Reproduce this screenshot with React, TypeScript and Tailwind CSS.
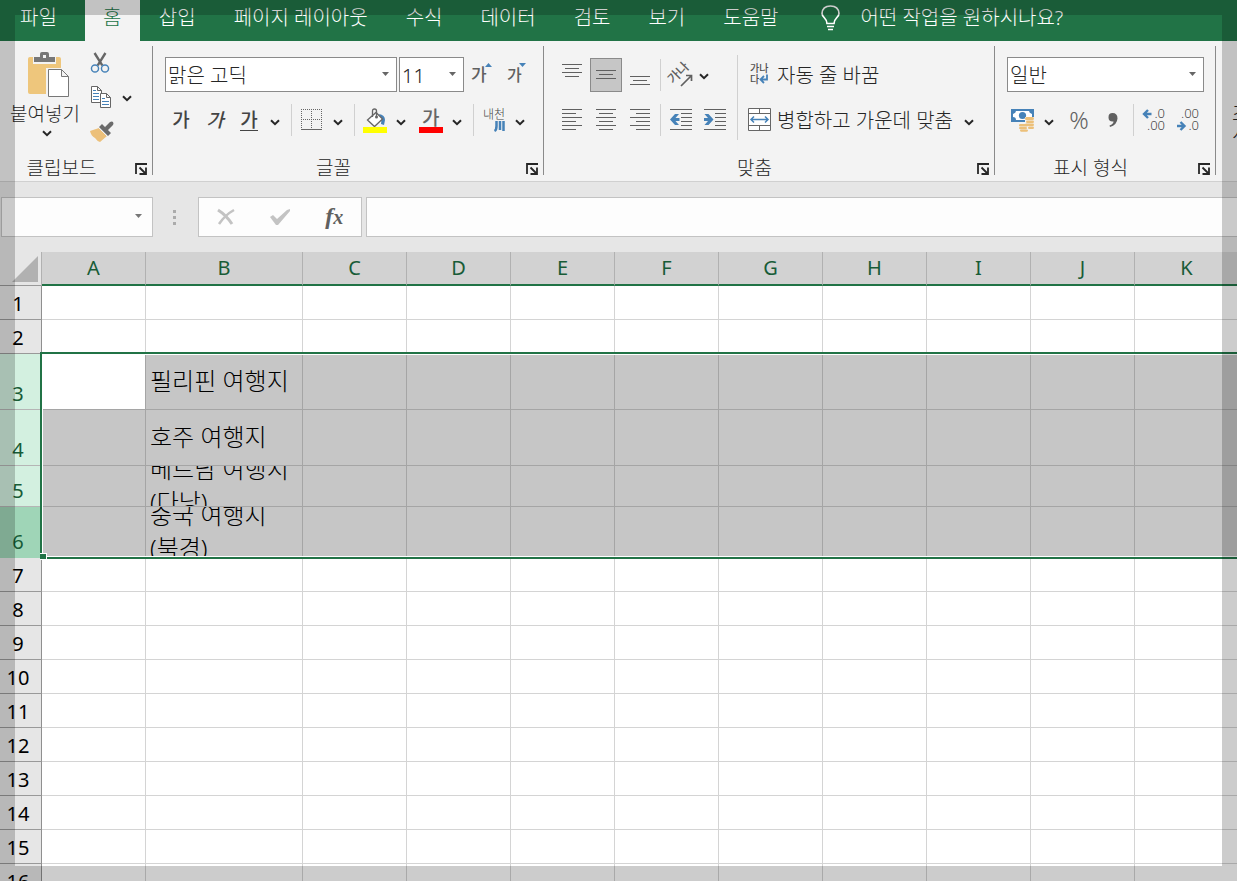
import type { ReactNode } from "react";

const tabs = ["삽입", "페이지 레이아웃", "수식", "데이터", "검토", "보기", "도움말"];

const columns = ["A", "B", "C", "D", "E", "F", "G", "H", "I", "J", "K"];

type Row = { n: number; text?: string[]; height: string; inner: string; selected?: boolean; head: string };

const plain = "bg-[#e6e6e6] text-black border-b-[#999999]";
const picked = "bg-[#d3f0e0] text-[#185c37] border-b-[#b5b5b5]";

const rows: Row[] = [
    { n: 1, height: "h-[34px]", inner: "h-[33px]", head: plain },
    { n: 2, height: "h-[34px]", inner: "h-[33px]", head: plain },
    { n: 3, text: ["필리핀 여행지"], height: "h-[56px]", inner: "h-[55px]", selected: true, head: picked },
    { n: 4, text: ["호주 여행지"], height: "h-[56px]", inner: "h-[55px]", selected: true, head: picked },
    { n: 5, text: ["베트남 여행지", "(다낭)"], height: "h-[41px]", inner: "h-[40px]", selected: true, head: picked },
    { n: 6, text: ["중국 여행지", "(북경)"], height: "h-[51px]", inner: "h-[50px]", selected: true, head: "bg-[#9fd5b7] text-[#185c37] border-b-[#9fd5b7]" },
    ...[7, 8, 9, 10, 11, 12, 13, 14, 15, 16].map((n) => ({ n, height: "h-[34px]", inner: "h-[33px]", head: plain })),
];

const Chevron = () => (
    <svg width="10" height="7" viewBox="0 0 10 7" fill="none" stroke="#262626" strokeWidth="2">
        <path d="M1 1.2 5 5.2 9 1.2" />
    </svg>
);

const MoreButton = ({ label, className = "" }: { label: string; className?: string }) => (
    <button aria-label={label} className={`flex h-8 w-3 shrink-0 items-center justify-center pt-1 ${className}`}>
        <Chevron />
    </button>
);

const Tool = ({ label, className = "w-8", children }: { label: string; className?: string; children: ReactNode }) => (
    <button aria-label={label} className={`flex h-[34px] shrink-0 items-center justify-center ${className}`}>
        {children}
    </button>
);

const Separator = ({ className = "" }: { className?: string }) => <div className={`h-8 w-px shrink-0 bg-[#d0d0d0] ${className}`} />;

const Group = ({ name, className, children }: { name: string; className: string; children: ReactNode }) => (
    <section aria-label={name} className={`flex shrink-0 flex-col border-r border-[#8a8a8a] ${className}`}>
        <div className="flex-1">{children}</div>
        <div className="flex h-4 items-end pr-[5px]">
            <h2 className="flex-1 pr-3 text-center text-[19px] leading-[14px]">{name}</h2>
            <button aria-label={`${name} 설정`} className="h-3 w-3">
                <svg width="12" height="12" viewBox="0 0 12 12" fill="none" stroke="#262626" strokeWidth="1.8">
                    <path d="M1 11V1H12M4.500 4.500l6 6M11 4.500V11H4.500" />
                </svg>
            </button>
        </div>
    </section>
);

const Dropdown = ({ label, value, className }: { label: string; value: string; className: string }) => (
    <div className={`relative h-[35px] shrink-0 ${className}`}>
        <select aria-label={label} className="h-full w-full appearance-none border border-[#8a8a8a] bg-white pt-0.5 pl-0.5">
            <option>{value}</option>
        </select>
        <svg className="pointer-events-none absolute top-[15px] right-2" width="7" height="4" viewBox="0 0 7 4" fill="#666">
            <path d="M0 0h7L3.500 4z" />
        </svg>
    </div>
);

const Lines = ({ d }: { d: string }) => (
    <svg width="22" height="22" viewBox="0 0 22 22" fill="none" stroke="#606060" strokeWidth="1" shapeRendering="crispEdges">
        <path d={d} />
    </svg>
);

const PasteIcon = () => (
    <svg width="42" height="46" viewBox="0 0 42 46">
        <path fill="#eec67c" d="M2 5h29q2 0 2 2v35H2q-2 0-2-2V7q0-2 2-2z" />
        <path fill="#f3f3f3" d="M5 4h23v8H5z" />
        <path fill="#777" fillRule="evenodd" d="M6 5h6V2q0-2 2-2h5q2 0 2 2v3h6v5H6zM15 3v3h3V3z" />
        <path fill="#f3f3f3" d="M18 16h24v30H18z" />
        <path fill="#fff" stroke="#777" d="M20.500 17.500h13l7 7v20h-20zM33.500 17.500v7h7" />
    </svg>
);

const ScissorsIcon = () => (
    <svg width="22" height="24" viewBox="0 0 22 24" fill="none">
        <path d="M5 1l8.500 13.500M17 1 8.500 14.500" stroke="#666" strokeWidth="2.600" />
        <circle cx="5.500" cy="18" r="3.900" stroke="#4682b8" strokeWidth="1.600" />
        <circle cx="16.500" cy="18" r="3.900" stroke="#4682b8" strokeWidth="1.600" />
    </svg>
);

const CopyIcon = () => (
    <svg width="22" height="24" viewBox="0 0 22 24">
        <path fill="#fff" stroke="#666" d="M1.500 1.500h6l4 4v12h-10zM7.500 1.500v4h4" />
        <path stroke="#4682b8" d="M3 5.500h3M3 8.500h6M3 11.500h6M3 14.500h6" />
        <path fill="#fff" stroke="#666" d="M10.500 8.500h6l4 4v10h-10zM16.500 8.500v4h4" />
        <path stroke="#4682b8" d="M12 13.500h3M12 16.500h7M12 19.500h7" />
    </svg>
);

const BrushIcon = () => (
    <svg width="24" height="22" viewBox="0 0 24 22">
        <path fill="#ecc07a" d="M0 10l9-3 8 8-7 6q-3-1-5-4-4-2-5-7z" />
        <path fill="#6b6b6b" d="M9 6l3-3 9 9-3 3zM15 6l5-5q2-1 3 0 1 2 0 3l-5 5z" />
        <path stroke="#f3f3f3" d="M8.500 6.500l9 9" />
    </svg>
);

const OrientationIcon = () => (
    <svg className="overflow-visible" width="24" height="24" viewBox="0 0 24 24">
        <text x="0" y="0" fontSize="13" fontWeight="500" fill="#606060" textAnchor="middle" transform="translate(12.500 13) rotate(-45)">가나</text>
        <path d="M12 23 22.500 12.500M17 12.500h5.500v5.500" fill="none" stroke="#606060" strokeWidth="1.700" />
    </svg>
);

const WrapIcon = () => (
    <svg className="overflow-visible" width="22" height="24" viewBox="0 0 22 24" fill="#505050" fontSize="10" fontWeight="500">
        <text x="1" y="9">가나</text>
        <text x="1" y="20">다</text>
        <path d="M18 11.500v5h-6M15 13l-3.500 3.500L15 20" fill="none" stroke="#4682b8" strokeWidth="1.800" />
    </svg>
);

const MergeIcon = () => (
    <svg width="24" height="24" viewBox="0 0 24 24" fill="none">
        <path fill="#fff" stroke="#666" d="M.5.500h22v22H.5zM.5 5.500h22M.5 17.500h22M11.500.500v5M11.500 17.500v5" />
        <path stroke="#4682b8" strokeWidth="1.500" d="M3 11.500h17M6 8.500l-3 3 3 3M17 8.500l3 3-3 3" />
    </svg>
);

const BorderIcon = () => (
    <svg width="22" height="22" viewBox="0 0 22 22" fill="none" stroke="#666" shapeRendering="crispEdges">
        <path strokeDasharray="1 1" d="M0 .5h21M0 10.500h21M.5 0v21M10.500 0v21M20.500 0v21" />
        <path d="M0 20.500h21" />
    </svg>
);

const BucketIcon = () => (
    <svg width="24" height="25" viewBox="0 0 24 25">
        <path fill="#4682b8" d="M16 6q6 1 6 6l-1 5-3-1q1-4-2-10z" />
        <path fill="#fff" stroke="#666" strokeWidth="1.300" d="M4.500 12 13 4.500l6.500 6.500-8 7.500z" />
        <path fill="none" stroke="#666" strokeWidth="1.300" d="M9.500 9V3q0-2 2-2t2 2v6" />
        <circle cx="13.500" cy="9" r="1.500" fill="#666" />
        <path fill="#ff0" d="M0 19h24v6H0z" />
    </svg>
);

const MoneyIcon = () => (
    <svg width="24" height="24" viewBox="0 0 24 24">
        <path fill="#4682b8" d="M0 1h23v13H0z" />
        <path fill="#fff" d="M5 3h13q0 2 3 3v3q-3 0-3 3H5q0-3-3-3V6q3-1 3-3z" />
        <circle cx="11.500" cy="7.500" r="3.600" fill="#4682b8" />
        <path fill="#f3f3f3" d="M14 9h10v14H7v-8h7z" />
        <g fill="#ecc07a">
            <rect x="14" y="9" width="9" height="3" rx="1.500" />
            <rect x="15" y="12.500" width="8" height="2.500" rx="1.200" />
            <rect x="14" y="15.500" width="9" height="2.500" rx="1.200" />
            <rect x="17" y="18.500" width="6" height="2.500" rx="1.200" />
            <rect x="8" y="16" width="9" height="2.500" rx="1.200" />
            <rect x="8" y="19" width="8" height="2.200" rx="1.100" />
            <rect x="9" y="21.500" width="8" height="2.200" rx="1.100" />
        </g>
    </svg>
);

const Indent = ({ arrow }: { arrow: string }) => (
    <svg width="22" height="22" viewBox="0 0 22 22">
        <path stroke="#606060" shapeRendering="crispEdges" d="M0 .5h22M11 4.500h11M11 8.500h11M11 12.500h11M11 16.500h11M0 20.500h22" />
        <path fill="#4682b8" d={arrow} />
    </svg>
);

const Ribbon = () => (
    <div className="flex h-[141px] border-b border-[#d0d0d0] bg-[#f3f3f3] pt-[5px] pb-[6px]">
        <Group name="클립보드" className="w-[153px]">
            <div className="flex">
                <button className="flex w-[90px] flex-col items-center pt-[6px]">
                    <span className="pl-2"><PasteIcon /></span>
                    <span className="pt-1 text-[19px] leading-6 whitespace-nowrap">붙여넣기</span>
                    <span className="pt-1 pl-1"><Chevron /></span>
                </button>
                <div>
                    <Tool label="잘라내기" className="w-5"><ScissorsIcon /></Tool>
                    <div className="flex">
                        <Tool label="복사" className="w-[22px]"><CopyIcon /></Tool>
                        <MoreButton label="복사 옵션" className="ml-[9px]" />
                    </div>
                    <Tool label="서식 복사" className="w-6 pt-0.5"><BrushIcon /></Tool>
                </div>
            </div>
        </Group>

        <Group name="글꼴" className="w-[391px]">
            <div className="flex pt-[11px] pl-3">
                <Dropdown label="글꼴 이름" value="맑은 고딕" className="w-[232px]" />
                <Dropdown label="글꼴 크기" value="11" className="ml-0.5 w-[65px]" />
                <Tool label="글꼴 크기 크게" className="w-9">
                    <svg className="overflow-visible" width="22" height="24" viewBox="0 0 22 24">
                        <text x="0" y="19" fontSize="17" fontWeight="500" fill="#606060">가</text>
                        <path fill="#4682b8" d="M14 5h7l-3.500-4z" />
                    </svg>
                </Tool>
                <Tool label="글꼴 크기 작게" className="w-9">
                    <svg className="overflow-visible" width="22" height="24" viewBox="0 0 22 24">
                        <text x="0" y="19" fontSize="16" fontWeight="500" fill="#606060">가</text>
                        <path fill="#4682b8" d="M12 1h7l-3.500 4z" />
                    </svg>
                </Tool>
            </div>
            <div className="flex items-center pt-[11px] pl-3">
                <Tool label="굵게"><span className="text-[19px] leading-5 font-medium text-[#444]">가</span></Tool>
                <Tool label="기울임꼴" className="w-9"><span className="text-[19px] leading-5 font-medium text-[#444] italic">가</span></Tool>
                <Tool label="밑줄"><span className="border-b border-[#444] text-[19px] leading-5 font-medium text-[#444]">가</span></Tool>
                <MoreButton label="밑줄 옵션" className="ml-1" />
                <Separator className="ml-[10px]" />
                <Tool label="테두리" className="w-10"><BorderIcon /></Tool>
                <MoreButton label="테두리 옵션" />
                <Separator className="ml-[10px]" />
                <Tool label="채우기 색" className="w-10"><BucketIcon /></Tool>
                <MoreButton label="채우기 색 옵션" />
                <Tool label="글꼴 색" className="ml-1 w-10">
                    <svg className="overflow-visible" width="24" height="25" viewBox="0 0 24 25">
                        <text x="3" y="17" fontSize="19" fontWeight="500" fill="#666">가</text>
                        <path fill="#f00" d="M0 19h24v6H0z" />
                    </svg>
                </Tool>
                <MoreButton label="글꼴 색 옵션" />
                <Separator className="ml-[10px]" />
                <Tool label="윗주" className="w-10">
                    <svg className="overflow-visible" width="22" height="25" viewBox="0 0 22 25">
                        <text x="0" y="11" fontSize="12" fill="#444">내천</text>
                        <path fill="none" stroke="#4682b8" strokeWidth="2.500" d="M13.500 13v5q0 4-2 5M17 13v9M20.500 13v10" />
                    </svg>
                </Tool>
                <MoreButton label="윗주 옵션" />
            </div>
        </Group>

        <Group name="맞춤" className="w-[451px]">
            <div className="flex">
                <div className="w-[193px] pt-[11px] pl-3">
                    <div className="flex h-[35px] items-center">
                        <Tool label="위쪽 맞춤"><Lines d="M1 .5h20M4 4.500h14M1 8.500h20M4 12.500h14" /></Tool>
                        <Tool label="가운데 맞춤" className="ml-0.5 w-8 border border-[#8a8a8a] bg-[#c6c6c6]"><Lines d="M1 6.500h20M4 10.500h14M1 14.500h20" /></Tool>
                        <Tool label="아래쪽 맞춤" className="ml-0.5 w-8"><Lines d="M1 12.500h20M4 16.500h14M1 20.500h20" /></Tool>
                        <Separator className="ml-1" />
                        <Tool label="방향" className="ml-[3px] w-[34px]"><OrientationIcon /></Tool>
                        <MoreButton label="방향 옵션" />
                    </div>
                    <div className="flex items-center pt-[11px]">
                        <Tool label="왼쪽 맞춤"><Lines d="M1 .5h20M1 4.500h14M1 8.500h20M1 12.500h14M1 16.500h20M1 20.500h14" /></Tool>
                        <Tool label="가운데 맞춤" className="ml-0.5 w-8"><Lines d="M1 .5h20M4 4.500h14M1 8.500h20M4 12.500h14M1 16.500h20M4 20.500h14" /></Tool>
                        <Tool label="오른쪽 맞춤" className="ml-0.5 w-8"><Lines d="M1 .5h20M7 4.500h14M1 8.500h20M7 12.500h14M1 16.500h20M7 20.500h14" /></Tool>
                        <Separator className="ml-1" />
                        <Tool label="내어쓰기" className="ml-[3px] w-[34px]"><Indent arrow="M0 10.500 5 5h4L5.500 9H9.500v3H5.500L9 16H5z" /></Tool>
                        <Tool label="들여쓰기" className="w-[34px]"><Indent arrow="M9.500 10.500 4.500 5h-4L4 9H0v3h4l-3.500 4h4z" /></Tool>
                    </div>
                </div>
                <div className="mt-[9px] h-[85px] w-px bg-[#d0d0d0]" />
                <div className="pt-[11px] pl-[10px]">
                    <button className="flex h-[35px] items-center gap-[5px] whitespace-nowrap">
                        <span className="flex w-6 justify-center"><WrapIcon /></span>
                        <span className="pt-0.5">자동 줄 바꿈</span>
                    </button>
                    <div className="flex items-center pt-[11px]">
                        <button className="flex h-[34px] items-center gap-[5px] whitespace-nowrap">
                            <MergeIcon />
                            <span className="pt-0.5">병합하고 가운데 맞춤</span>
                        </button>
                        <MoreButton label="병합 옵션" className="ml-[10px]" />
                    </div>
                </div>
            </div>
        </Group>

        <Group name="표시 형식" className="w-[221px]">
            <div className="px-3 pt-[11px]">
                <Dropdown label="표시 형식" value="일반" className="w-[197px]" />
            </div>
            <div className="flex items-center pt-[11px] pl-3">
                <Tool label="회계 표시 형식"><MoneyIcon /></Tool>
                <MoreButton label="회계 옵션" className="ml-1" />
                <Tool label="백분율 스타일" className="ml-2 w-8"><span className="text-2xl text-[#606060]">%</span></Tool>
                <Tool label="쉼표 스타일" className="w-9">
                    <svg width="10" height="16" viewBox="0 0 10 16" fill="#606060">
                        <path d="M4.500 1Q9.500 1 9.500 6.500 9 13 2 15l-.5-1.500Q5.500 12 5.500 9.500 .5 10 .5 5.200 .5 1 4.500 1z" />
                    </svg>
                </Tool>
                <Separator className="ml-0.5" />
                <Tool label="자릿수 늘림" className="ml-1 w-8">
                    <svg className="overflow-visible" width="24" height="24" viewBox="0 0 24 24" fill="#444" fontSize="13">
                        <text x="23" y="10" textAnchor="end">.0</text>
                        <text x="23" y="22" textAnchor="end">.00</text>
                        <path d="M1.500 6h8M6 2 2 6l4 4" fill="none" stroke="#4682b8" strokeWidth="2.400" />
                    </svg>
                </Tool>
                <Tool label="자릿수 줄임" className="ml-0.5 w-8">
                    <svg className="overflow-visible" width="24" height="24" viewBox="0 0 24 24" fill="#444" fontSize="13">
                        <text x="23" y="10" textAnchor="end">.00</text>
                        <text x="23" y="22" textAnchor="end">.0</text>
                        <path d="M1 18h8M4.500 14l4 4-4 4" fill="none" stroke="#4682b8" strokeWidth="2.400" />
                    </svg>
                </Tool>
            </div>
        </Group>

        <button className="flex shrink-0 flex-col items-center pt-[58px] pl-4 leading-5 whitespace-nowrap">
            <span>조건부</span>
            <span className="self-start">서식</span>
        </button>
    </div>
);

const FormulaBar = () => (
    <div className="flex h-[70px] items-center bg-[#e6e6e6] pl-px">
        <div className="relative h-10 w-[152px] shrink-0">
            <input aria-label="이름 상자" className="h-full w-full border border-[#c3c3c3] bg-[#fdfdfd] px-2" />
            <svg className="pointer-events-none absolute top-[17px] right-[11px]" width="7" height="4" viewBox="0 0 7 4" fill="#777">
                <path d="M0 0h7L3.500 4z" />
            </svg>
        </div>
        <div className="flex w-[45px] shrink-0 flex-col items-center gap-[3px] pr-0.5">
            <i className="h-[3px] w-[3px] bg-[#ababab]" />
            <i className="h-[3px] w-[3px] bg-[#ababab]" />
            <i className="h-[3px] w-[3px] bg-[#ababab]" />
        </div>
        <div className="flex h-10 w-[164px] shrink-0 items-center justify-around border border-[#c3c3c3] bg-[#fdfdfd]">
            <button aria-label="취소">
                <svg width="18" height="18" viewBox="0 0 18 18" fill="none" stroke="#c3c3c3">
                    <path strokeWidth="3" d="M1 2q8 5 14 14" />
                    <path strokeWidth="2.500" d="M17 2Q8 7 2 16" />
                </svg>
            </button>
            <button aria-label="입력">
                <svg width="20" height="18" viewBox="0 0 20 18" fill="#c3c3c3">
                    <path d="M0 9l3-2 4 4L17 2l3-1v2L8 17H6z" />
                </svg>
            </button>
            <button aria-label="함수 삽입" className="font-['Liberation_Serif',serif] text-2xl leading-6 font-bold text-[#606060] italic">
                f<span className="text-xl">x</span>
            </button>
        </div>
        <input aria-label="수식 입력줄" className="ml-1 h-10 min-w-0 flex-1 border border-r-0 border-[#c3c3c3] bg-[#fdfdfd] px-2" />
    </div>
);

const cellClass = (row: Row, col: string) => {
    if (!row.selected) return "border-[#d4d4d4]";
    return col === "A" && row.n === 3 ? "border-[#a5a5a5] bg-white" : "border-[#a5a5a5] bg-[#c6c6c6]";
};

const Sheet = () => (
    <div className="relative flex-1 overflow-hidden bg-white">
        <table className="w-[1239px] table-fixed border-separate border-spacing-0">
            <colgroup>
                <col className="w-[42px]" />
                {columns.map((c) => <col key={c} className={c === "B" ? "w-[157px]" : "w-[104px]"} />)}
            </colgroup>
            <thead>
                <tr className="h-[34px]">
                    <th aria-label="모두 선택" className="border-r border-b border-r-[#b1b1b1] border-b-[#999999] bg-[#e6e6e6] p-0">
                        <svg className="ml-3" width="26" height="26" viewBox="0 0 26 26" fill="#b1b1b1"><path d="M26 0v26H0z" /></svg>
                    </th>
                    {columns.map((c) => (
                        <th key={c} scope="col" className="border-r border-b-2 border-r-[#b1b1b1] border-b-[#217346] bg-[#d2d2d2] p-0 font-normal text-[#185c37]">{c}</th>
                    ))}
                </tr>
            </thead>
            <tbody>
                {rows.map((row) => (
                    <tr key={row.n} className={row.height}>
                        <th scope="row" className={`border-r border-b border-r-[#8f8f8f] p-0 pr-[5px] align-bottom leading-[30px] font-normal ${row.head}`}>{row.n}</th>
                        {columns.map((c) => (
                            <td key={c} className={`border-r border-b p-0 ${cellClass(row, c)}`}>
                                {c === "B" && row.text && (
                                    <div className={`flex flex-col justify-center overflow-hidden pb-0.5 pl-1 text-2xl leading-[33px] font-light whitespace-nowrap text-black ${row.inner}`}>
                                        {row.text.map((t) => <p key={t} className="shrink-0">{t}</p>)}
                                    </div>
                                )}
                            </td>
                        ))}
                    </tr>
                ))}
            </tbody>
        </table>
        {/* selection outline with its fill handle */}
        <div className="pointer-events-none absolute top-[100px] -right-1 left-10 h-[207px] border-2 border-[#217346] inset-ring inset-ring-white">
            <div className="absolute -bottom-[3px] -left-0.5 h-[7px] w-[7px] border border-l-0 border-white bg-[#217346]" />
        </div>
    </div>
);

export default function App() {
    return (
        <div className="relative flex h-screen flex-col overflow-hidden bg-[#e6e6e6] font-['Noto_Sans','Noto_Sans_CJK_KR',sans-serif] text-[20px] text-[#262626]">
            <nav className="flex h-[41px] shrink-0 bg-[#217346] font-light text-white">
                <button className="shrink-0 pr-[28px] pb-[5px] pl-5">파일</button>
                <button className="w-[55px] shrink-0 bg-[#f3f3f3] pb-[5px] text-[#217346]">홈</button>
                {tabs.map((t) => (
                    <button key={t} className="shrink-0 px-[19px] pb-[5px] whitespace-nowrap">{t}</button>
                ))}
                <button className="ml-6 flex shrink-0 items-center gap-5 pb-[5px] whitespace-nowrap">
                    <svg width="19" height="26" viewBox="0 0 19 26" fill="none" stroke="#fff" strokeWidth="1.700">
                        <path d="M6 18.500q0-3-2.500-5.500T1 8.500Q1.500 1 9.500 1T18 8.500q0 2-2.500 4.500T13 18.500zM6 21.500h7M7 24.500h5" />
                    </svg>
                    어떤 작업을 원하시나요?
                </button>
            </nav>
            <div className="shrink-0 font-light"><Ribbon /></div>
            <div className="shrink-0"><FormulaBar /></div>
            <Sheet />
            {/* translucent frame around the window */}
            <div className="pointer-events-none absolute inset-0 border-[15px] border-black/20" />
        </div>
    );
}
